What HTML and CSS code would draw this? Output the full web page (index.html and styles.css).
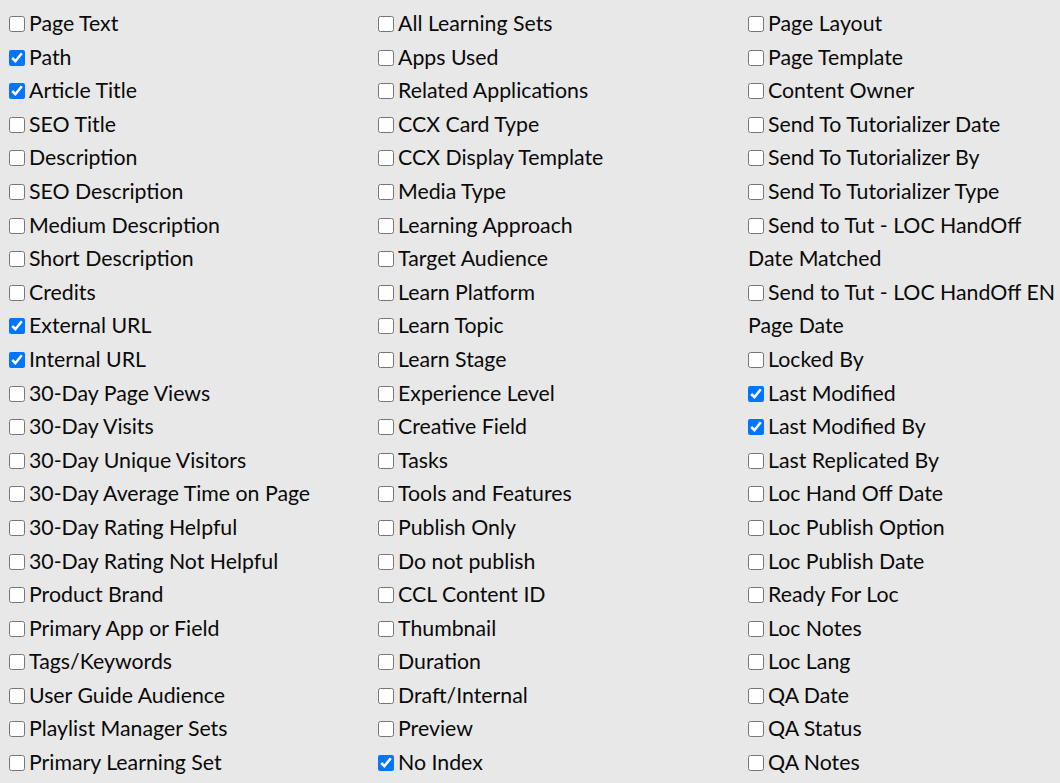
FILE: index.html
```html
<!DOCTYPE html>
<html lang="en">
<head>
<meta charset="utf-8">
<title>Columns</title>
<link rel="stylesheet" href="styles.css">
</head>
<body>
<div class="grid">
  <div class="col">
    <label class="item"><input type="checkbox">Page Text</label>
    <label class="item"><input type="checkbox" checked>Path</label>
    <label class="item"><input type="checkbox" checked>Article Title</label>
    <label class="item"><input type="checkbox">SEO Title</label>
    <label class="item"><input type="checkbox">Description</label>
    <label class="item"><input type="checkbox">SEO Description</label>
    <label class="item"><input type="checkbox">Medium Description</label>
    <label class="item"><input type="checkbox">Short Description</label>
    <label class="item"><input type="checkbox">Credits</label>
    <label class="item"><input type="checkbox" checked>External URL</label>
    <label class="item"><input type="checkbox" checked>Internal URL</label>
    <label class="item"><input type="checkbox">30-Day Page Views</label>
    <label class="item"><input type="checkbox">30-Day Visits</label>
    <label class="item"><input type="checkbox">30-Day Unique Visitors</label>
    <label class="item"><input type="checkbox">30-Day Average Time on Page</label>
    <label class="item"><input type="checkbox">30-Day Rating Helpful</label>
    <label class="item"><input type="checkbox">30-Day Rating Not Helpful</label>
    <label class="item"><input type="checkbox">Product Brand</label>
    <label class="item"><input type="checkbox">Primary App or Field</label>
    <label class="item"><input type="checkbox">Tags/Keywords</label>
    <label class="item"><input type="checkbox">User Guide Audience</label>
    <label class="item"><input type="checkbox">Playlist Manager Sets</label>
    <label class="item"><input type="checkbox">Primary Learning Set</label>
  </div>
  <div class="col">
    <label class="item"><input type="checkbox">All Learning Sets</label>
    <label class="item"><input type="checkbox">Apps Used</label>
    <label class="item"><input type="checkbox">Related Applications</label>
    <label class="item"><input type="checkbox">CCX Card Type</label>
    <label class="item"><input type="checkbox">CCX Display Template</label>
    <label class="item"><input type="checkbox">Media Type</label>
    <label class="item"><input type="checkbox">Learning Approach</label>
    <label class="item"><input type="checkbox">Target Audience</label>
    <label class="item"><input type="checkbox">Learn Platform</label>
    <label class="item"><input type="checkbox">Learn Topic</label>
    <label class="item"><input type="checkbox">Learn Stage</label>
    <label class="item"><input type="checkbox">Experience Level</label>
    <label class="item"><input type="checkbox">Creative Field</label>
    <label class="item"><input type="checkbox">Tasks</label>
    <label class="item"><input type="checkbox">Tools and Features</label>
    <label class="item"><input type="checkbox">Publish Only</label>
    <label class="item"><input type="checkbox">Do not publish</label>
    <label class="item"><input type="checkbox">CCL Content ID</label>
    <label class="item"><input type="checkbox">Thumbnail</label>
    <label class="item"><input type="checkbox">Duration</label>
    <label class="item"><input type="checkbox">Draft/Internal</label>
    <label class="item"><input type="checkbox">Preview</label>
    <label class="item"><input type="checkbox" checked>No Index</label>
  </div>
  <div class="col">
    <label class="item"><input type="checkbox">Page Layout</label>
    <label class="item"><input type="checkbox">Page Template</label>
    <label class="item"><input type="checkbox">Content Owner</label>
    <label class="item"><input type="checkbox">Send To Tutorializer Date</label>
    <label class="item"><input type="checkbox">Send To Tutorializer By</label>
    <label class="item"><input type="checkbox">Send To Tutorializer Type</label>
    <label class="item"><input type="checkbox">Send to Tut - LOC HandOff Date Matched</label>
    <label class="item"><input type="checkbox">Send to Tut - LOC HandOff EN Page Date</label>
    <label class="item"><input type="checkbox">Locked By</label>
    <label class="item"><input type="checkbox" checked>Last Modified</label>
    <label class="item"><input type="checkbox" checked>Last Modified By</label>
    <label class="item"><input type="checkbox">Last Replicated By</label>
    <label class="item"><input type="checkbox">Loc Hand Off Date</label>
    <label class="item"><input type="checkbox">Loc Publish Option</label>
    <label class="item"><input type="checkbox">Loc Publish Date</label>
    <label class="item"><input type="checkbox">Ready For Loc</label>
    <label class="item"><input type="checkbox">Loc Notes</label>
    <label class="item"><input type="checkbox">Loc Lang</label>
    <label class="item"><input type="checkbox">QA Date</label>
    <label class="item"><input type="checkbox">QA Status</label>
    <label class="item"><input type="checkbox">QA Notes</label>
  </div>
</div>
</body>
</html>
```

FILE: styles.css
```css
html, body {
  margin: 0;
  padding: 0;
  background: #e8e8e8;
}
body {
  font-family: Lato, "Liberation Sans", sans-serif;
  font-size: 21.3px;
  color: #0a0a0a;
  overflow: hidden;
}
.grid {
  display: grid;
  grid-template-columns: 369px 370px 1fr;
  padding: 7px 0 0 9px;
}
.col {
  display: flex;
  flex-direction: column;
}
.item {
  display: block;
  line-height: 33.6px;
}
.item input {
  width: 16px;
  height: 16px;
  margin: 0 4px 0 0;
  vertical-align: -1px;
}
```
